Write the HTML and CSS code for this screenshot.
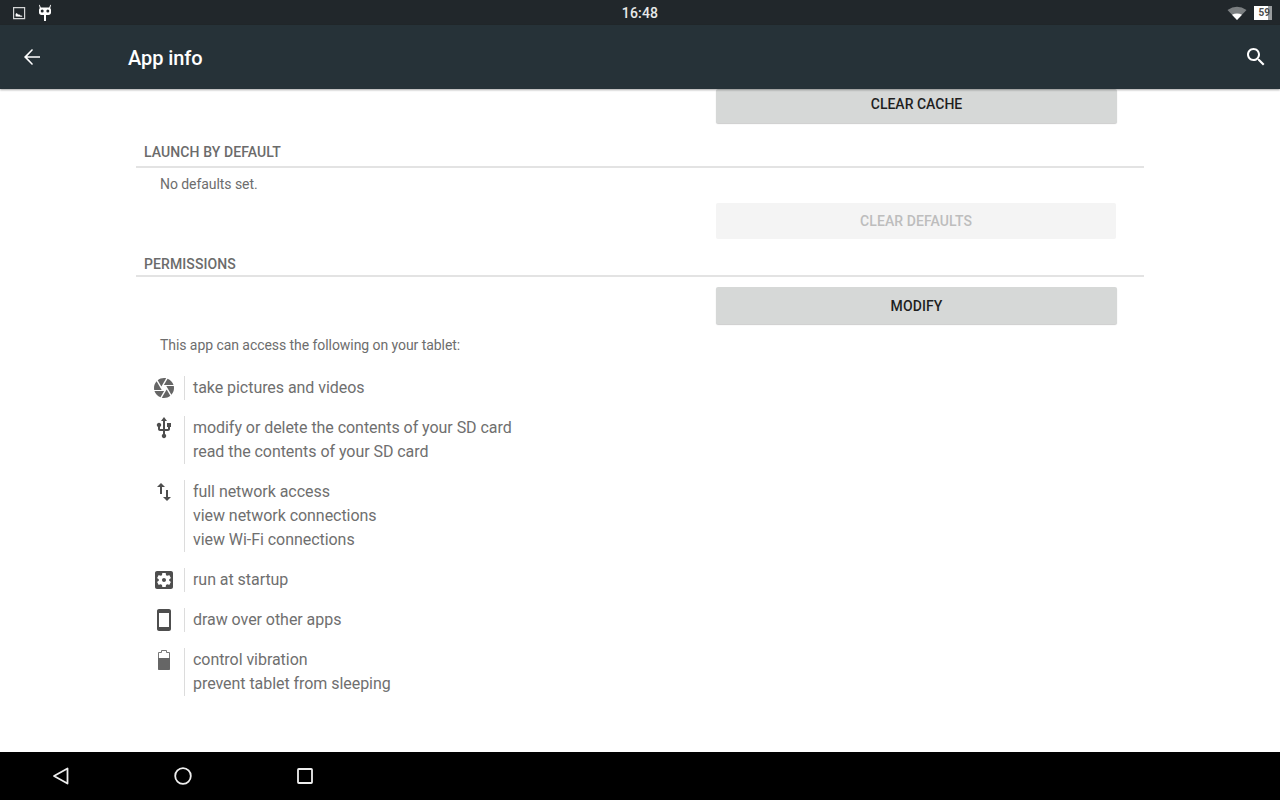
FILE: index.html
```html
<!DOCTYPE html>
<html lang="en">
<head>
<meta charset="utf-8">
<title>App info</title>
<link rel="stylesheet" href="styles.css">
</head>
<body>
<div class="screen">
  <header class="status">
    <div class="status-side">
      <svg width="14" height="14" viewBox="0 0 14 14"><path fill="none" stroke="#d4d5d6" stroke-width="1.200" d="M1.600 1.600h11v11h-11z"/><path fill="#fff" d="M3.600 10.500V8l1.200-1 1.200 1.400 1.400.2 1 .9 1.800.2v1z"/></svg>
      <svg width="16" height="18" viewBox="0 0 16 18"><path fill="#fff" d="M2 1l.7-.2 1.100 2.700h8.400L13.300.8 14 1l-.8 3.200c.6.500.8 1.100.8 1.800v2.500C14 10 13 11 11.500 11H9v5.500q0 .5-.5.500h-1q-.5 0-.5-.5V11H4.500C3 11 2 10 2 8.500V6c0-.7.200-1.300.8-1.800z"/><circle cx="5.200" cy="7" r="1.500" fill="#23292d"/><circle cx="10.800" cy="7" r="1.500" fill="#23292d"/></svg>
    </div>
    <div class="clock">16:48</div>
    <div class="status-side">
      <svg width="20" height="14" viewBox="0 0 20 14"><path fill="#7b7f81" d="M.5 4Q10 -2.400 19.500 4L10 14z"/><path fill="#fff" d="M5 8.800Q10 6 15 8.800L10 14z"/></svg>
      <div class="battery"><span class="battery-num">59</span></div>
    </div>
  </header>
  <div class="toolbar">
    <svg width="24" height="24" viewBox="0 0 24 24"><path fill="#fff" d="M20 11.200H7.200l5.800-6.100-1-1.100-8 8 8 8 1-1.100-5.800-6.100H20z"/></svg>
    <h1 class="title">App info</h1>
    <svg width="24" height="24" viewBox="0 0 24 24"><path fill="#fff" d="M15.500 14h-.79l-.28-.27C15.410 12.590 16 11.110 16 9.500 16 5.910 13.090 3 9.500 3S3 5.910 3 9.500 5.910 16 9.500 16c1.610 0 3.090-.59 4.230-1.570l.27.28v.79l5 4.990L20.490 19l-4.990-5zm-6 0C7.010 14 5 11.990 5 9.500S7.010 5 9.500 5 14 7.010 14 9.500 11.990 14 9.500 14z"/></svg>
  </div>
  <main class="content">
    <div class="btn-row"><button class="btn clipped">CLEAR CACHE</button></div>
    <h2 class="section first">LAUNCH BY DEFAULT</h2>
    <p class="note nodefaults">No defaults set.</p>
    <div class="btn-row"><button class="btn disabled">CLEAR DEFAULTS</button></div>
    <h2 class="section second">PERMISSIONS</h2>
    <div class="btn-row"><button class="btn modify">MODIFY</button></div>
    <p class="note access">This app can access the following on your tablet:</p>
    <ul class="perms">
      <li class="perm">
        <span class="perm-icon"><svg class="ic ic-mid" width="24" height="24" viewBox="0 0 24 24"><path d="M9.400 10.500l4.770-8.260C13.470 2.090 12.750 2 12 2c-2.400 0-4.600.85-6.320 2.250l3.660 6.350.06-.1zM21.540 9c-.92-2.920-3.150-5.260-6-6.340L11.880 9h9.660zm.26 1h-7.490l.29.500 4.760 8.250C21 16.970 22 14.610 22 12c0-.69-.07-1.350-.2-2zM8.540 12l-3.900-6.750C3.010 7.030 2 9.390 2 12c0 .69.07 1.350.2 2h7.490l-1.150-2zm-6.080 3c.92 2.920 3.150 5.260 6 6.340L12.120 15H2.460zm11.270 0l-3.900 6.760c.7.15 1.420.24 2.170.24 2.400 0 4.600-.85 6.320-2.250l-3.660-6.350-.93 1.600z"/></svg></span>
        <div class="perm-text"><div>take pictures and videos</div></div>
      </li>
      <li class="perm">
        <span class="perm-icon"><svg class="ic" width="24" height="24" viewBox="0 0 24 24"><path d="M15 7v4h1v2h-3V5h2l-3-4-3 4h2v8H8v-2.070c.7-.37 1.200-1.080 1.200-1.930 0-1.210-.99-2.200-2.200-2.200-1.210 0-2.200.99-2.200 2.200 0 .85.5 1.560 1.200 1.930V13c0 1.110.89 2 2 2h3v3.050c-.71.37-1.200 1.100-1.200 1.950 0 1.220.99 2.200 2.200 2.200 1.210 0 2.200-.98 2.200-2.200 0-.85-.49-1.580-1.200-1.950V15h3c1.110 0 2-.89 2-2v-2h1V7h-4z"/></svg></span>
        <div class="perm-text"><div>modify or delete the contents of your SD card</div><div>read the contents of your SD card</div></div>
      </li>
      <li class="perm">
        <span class="perm-icon"><svg class="ic" width="24" height="24" viewBox="0 0 24 24"><path d="M16 17.010V10h-2v7.010h-3L15 21l4-3.990h-3zM9 3L5 6.990h3V14h2V6.990h3L9 3z"/></svg></span>
        <div class="perm-text"><div>full network access</div><div>view network connections</div><div>view Wi-Fi connections</div></div>
      </li>
      <li class="perm">
        <span class="perm-icon"><svg class="ic" width="24" height="24" viewBox="0 0 24 24"><path d="M12 10c-1.100 0-2 .9-2 2s.9 2 2 2 2-.9 2-2-.9-2-2-2zm7-7H5c-1.100 0-2 .9-2 2v14c0 1.100.9 2 2 2h14c1.100 0 2-.9 2-2V5c0-1.100-.9-2-2-2zm-1.750 9c0 .23-.02.46-.05.68l1.480 1.160c.13.11.17.3.08.45l-1.400 2.420c-.09.15-.27.21-.43.15l-1.740-.7c-.36.28-.76.51-1.180.69l-.26 1.850c-.03.17-.18.3-.35.3h-2.800c-.17 0-.32-.13-.35-.29l-.26-1.850c-.43-.18-.82-.41-1.180-.69l-1.740.7c-.16.06-.34 0-.43-.15l-1.400-2.420c-.09-.15-.05-.34.08-.45l1.480-1.160c-.03-.23-.05-.46-.05-.69 0-.23.02-.46.05-.68l-1.480-1.160c-.13-.11-.17-.3-.08-.45l1.400-2.420c.09-.15.27-.21.43-.15l1.740.7c.36-.28.76-.51 1.180-.69l.26-1.850c.03-.17.18-.3.35-.3h2.800c.17 0 .32.13.35.29l.26 1.850c.43.18.82.41 1.180.69l1.740-.7c.16-.06.34 0 .43.15l1.400 2.420c.09.15.05.34-.08.45l-1.480 1.160c.03.23.05.46.05.69z"/></svg></span>
        <div class="perm-text"><div>run at startup</div></div>
      </li>
      <li class="perm">
        <span class="perm-icon"><svg class="ic" width="24" height="24" viewBox="0 0 24 24"><path d="M17 1.010L7 1c-1.100 0-1.990.9-1.990 2v18c0 1.100.89 2 1.990 2h10c1.100 0 2-.9 2-2V3c0-1.100-.9-1.990-2-1.990zM17 19H7V5h10v14z"/></svg></span>
        <div class="perm-text"><div>draw over other apps</div></div>
      </li>
      <li class="perm">
        <span class="perm-icon"><svg class="ic ic-mid" width="24" height="24" viewBox="0 0 24 24"><path fill="#fff" stroke="#777" d="M9.500 2.500v2H6.500v8h11v-8h-3v-2z"/><path d="M6 10h12v11.300q0 .7-.7.700H6.700q-.7 0-.7-.7z"/></svg></span>
        <div class="perm-text"><div>control vibration</div><div>prevent tablet from sleeping</div></div>
      </li>
    </ul>
  </main>
  <nav class="navbar">
    <svg width="18" height="18" viewBox="0 0 18 18"><path fill="none" stroke="#eee" stroke-width="1.800" stroke-linejoin="round" d="M15.500 1.500v15L2 9z"/></svg>
    <svg width="18" height="18" viewBox="0 0 18 18"><circle cx="9" cy="9" r="7.800" fill="none" stroke="#eee" stroke-width="1.800"/></svg>
    <svg width="18" height="18" viewBox="0 0 18 18"><rect x="2" y="2" width="14" height="14" rx=".8" fill="none" stroke="#eee" stroke-width="1.800"/></svg>
  </nav>
</div>
</body>
</html>
```
FILE: styles.css
```css
* { box-sizing: border-box; }
html, body { margin: 0; padding: 0; background: #000; }
.screen {
  width: 1280px;
  height: 800px;
  display: flex;
  flex-direction: column;
  overflow: hidden;
  background: #fff;
  font-family: Roboto, "Liberation Sans", sans-serif;
}
.status {
  height: 25px;
  flex: none;
  background: #21272b;
  display: grid;
  grid-template-columns: 1fr auto 1fr;
  align-items: center;
  padding: 0 8px;
}
.status-side { display: flex; align-items: center; gap: 11px; padding-left: 4px; }
.status-side:last-child { justify-content: flex-end; gap: 7px; padding-left: 0; }
.clock { color: #e8e9e9; font-size: 14px; font-weight: 500; letter-spacing: .2px; }
.battery {
  width: 18px;
  height: 14px;
  background: linear-gradient(90deg, #fff 0 78%, #9a9c9e 78% 100%);
  display: flex;
  align-items: center;
  justify-content: flex-end;
  padding-right: 2px;
}
.battery-num { color: #4a4d4f; font-size: 10px; font-weight: 700; line-height: 1; }
.toolbar {
  height: 64px;
  flex: none;
  background: #263238;
  display: flex;
  align-items: center;
  padding: 0 12px 0 20px;
  position: relative;
  z-index: 2;
  box-shadow: 0 1px 2px rgba(0,0,0,.35);
}
.title {
  margin: 2px 0 0 84px;
  flex: 1;
  color: #fff;
  font-size: 20px;
  font-weight: 500;
  letter-spacing: -.08px;
}
.content {
  flex: 1;
  min-height: 0;
  overflow: hidden;
  padding: 0 136px;
}
.btn-row { display: flex; padding-left: 580px; }
.btn {
  width: 401px;
  border: 0;
  border-radius: 2px;
  background: #d6d8d7;
  color: #1f1f1f;
  font: 500 14px Roboto, "Liberation Sans", sans-serif;
  box-shadow: 0 1px 1px rgba(0,0,0,.2);
  padding: 0;
}
.clipped { height: 34px; padding-bottom: 4px; }
.modify { height: 37px; letter-spacing: .1px; }
.disabled {
  width: 400px;
  height: 36px;
  background: #f4f4f4;
  color: #bdbdbd;
  box-shadow: none;
  letter-spacing: .08px;
}
.section {
  margin: 0;
  padding: 0 0 6px 8px;
  font-size: 14px;
  font-weight: 500;
  line-height: 16px;
  letter-spacing: .1px;
  color: #6b6b6b;
  border-bottom: 2px solid #e3e3e3;
}
.section.first { margin-top: 21px; }
.section.second { margin-top: 17px; padding-bottom: 3px; }
.section.second + .btn-row { margin-top: 10px; }
.note { margin: 0; padding-left: 24px; font-size: 14px; line-height: 20px; letter-spacing: -.06px; color: #6d6d6d; }
.nodefaults { margin-top: 6px; margin-bottom: 9px; }
.access { margin-top: 11px; }
.perms { list-style: none; margin: 21px 0 0; padding: 0; }
.perm { display: flex; margin-bottom: 16px; }
.perm-icon { width: 48px; flex: none; padding-left: 16px; height: 24px; }
.ic { display: block; fill: #4e4e4e; }
.ic-mid { fill: #666; }
.perm-text {
  border-left: 1px solid #dcdcdc;
  padding-left: 8px;
  font-size: 16px;
  line-height: 24px;
  letter-spacing: -.05px;
  color: #6f6f6f;
}
.navbar {
  height: 48px;
  flex: none;
  background: #000;
  display: flex;
  align-items: center;
  gap: 104px;
  padding-left: 52px;
}
```
